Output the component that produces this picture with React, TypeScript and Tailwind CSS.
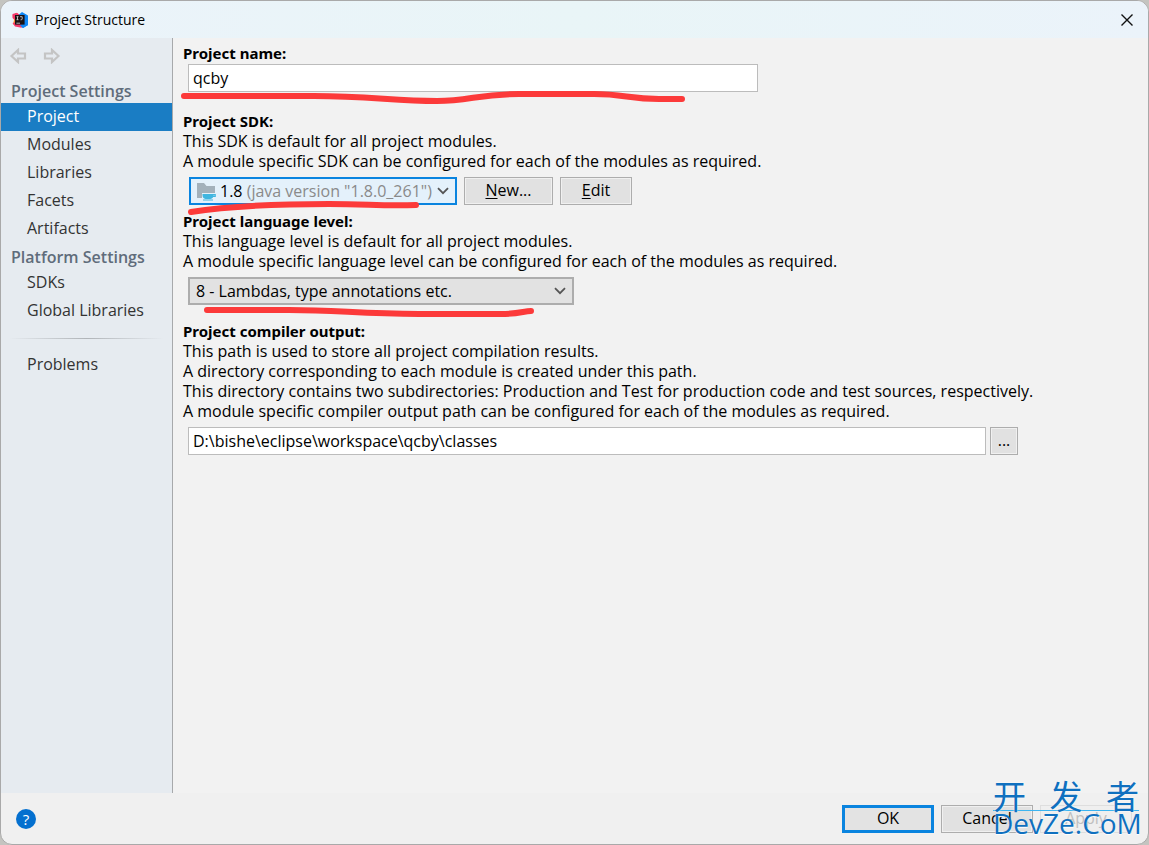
import { useState } from "react";
import type { ReactNode } from "react";
import clsx from "clsx";

const projectItems = ["Project", "Modules", "Libraries", "Facets", "Artifacts"];
const platformItems = ["SDKs", "Global Libraries"];

const IdeaLogo = () => (
  <svg width="16" height="16" viewBox="0 0 16 16" aria-hidden="true">
    <path d="M0.5 3.5 L4 1 L8 3 L6 12 L1 12.5 L2 8 Z" fill="#fb8a2c" />
    <path d="M0.5 2 L5 0.8 L9 4 L3 8 L0.5 6 Z" fill="#f5386b" />
    <path d="M7 2.5 L10 0 L16 3.5 L16 13 L11 16 L7 13 Z" fill="#0f86f5" />
    <path d="M0.5 11 L5 10 L12 13 L9.5 15.8 L3 14.5 Z" fill="#f5386b" />
    <path d="M11 11 L16 13 L11 16 L8 13.5 Z" fill="#0f86f5" />
    <rect x="3" y="3" width="9.6" height="9.6" fill="#1a1214" />
    <path
      d="M4.5 4.7h2M5.5 4.7v3M4.5 7.7h2M8 4.7h2.2v2.4q0 .8-1.6.7M4.4 11.2h3.6"
      stroke="#ddd"
      strokeWidth="0.8"
      fill="none"
    />
  </svg>
);

const ArrowIcon = ({ flip }: { flip?: boolean }) => (
  <svg
    width="18"
    height="16"
    viewBox="0 0 18 16"
    className={clsx(flip && "rotate-180")}
    aria-hidden="true"
  >
    <path
      d="M2.5 8 L9 2 V5.5 H16 V10.5 H9 V14 Z"
      fill="none"
      stroke="#c4c4c4"
      strokeWidth="2.2"
    />
  </svg>
);

const JdkIcon = () => (
  <svg width="20" height="20" viewBox="0 0 20 20" aria-hidden="true">
    <path d="M1 2h7l2.5 3H19v7H6v5H1z" fill="#a3b1bb" />
    <path d="M6.5 13h11v1q0 3.4-3 4h-5q-3-.6-3-4z" fill="#40b6e0" />
    <path d="M17 13.7h2.2v1.6H17" fill="none" stroke="#40b6e0" strokeWidth="1.2" />
    <path d="M7 18.4h10v1.1H7z" fill="#40b6e0" />
  </svg>
);

const Chevron = () => (
  <svg width="12" height="8" viewBox="0 0 12 8" aria-hidden="true">
    <path d="M1 1.2 L6 6.2 L11 1.2" fill="none" stroke="#555" strokeWidth="1.8" />
  </svg>
);

const Stroke = ({ d, className }: { d: string; className: string }) => (
  <svg
    width="510"
    height="24"
    viewBox="0 0 510 24"
    className={clsx("pointer-events-none absolute z-10", className)}
    aria-hidden="true"
  >
    <path
      d={d}
      fill="none"
      stroke="#fc3a3a"
      strokeWidth="6"
      strokeLinecap="round"
      strokeLinejoin="round"
    />
  </svg>
);

const NavGroup = ({
  title,
  items,
  active,
  onSelect,
}: {
  title?: string;
  items: string[];
  active: string;
  onSelect: (item: string) => void;
}) => (
  <div>
    {title && (
      <h2 className="h-[26px] pl-[10px] font-semibold leading-7 text-[#5f6c7b]">{title}</h2>
    )}
    <ul>
      {items.map((item) => (
        <li key={item}>
          <button
            type="button"
            onClick={() => onSelect(item)}
            className={clsx(
              "block h-7 w-full pb-0.5 pl-[26px] text-left",
              active === item ? "bg-[#1a7dc4] text-white" : "text-[#333]"
            )}
          >
            {item}
          </button>
        </li>
      ))}
    </ul>
  </div>
);

const PushButton = ({
  children,
  className,
  label,
}: {
  children: ReactNode;
  className?: string;
  label?: string;
}) => (
  <button
    type="button"
    aria-label={label}
    className={clsx(
      "h-7 border border-[#adadad] bg-[#e1e1e1] pb-0.5 shadow-[inset_0_0_0_1px_#f0f0f0]",
      className
    )}
  >
    {children}
  </button>
);

const App = () => {
  const [active, setActive] = useState("Project");
  const [name, setName] = useState("qcby");
  const [output, setOutput] = useState("D:\\bishe\\eclipse\\workspace\\qcby\\classes");

  return (
    <div className="min-h-screen bg-[#c4c4c0] font-['Open_Sans','Noto_Sans_CJK_SC',sans-serif] text-[16px] leading-5 text-black">
      <div className="flex min-h-screen flex-col overflow-hidden rounded-xl border border-[#a9a9a9] bg-[#f0f0f0]">
        <header className="flex h-[37px] items-center gap-[7px] bg-gradient-to-r from-[#ebf3fa] via-[#e9f5f7] to-[#ebf3fa] pl-[11px] pr-[15px]">
          <IdeaLogo />
          <h1 className="flex-1 text-[14px]">Project Structure</h1>
          <button type="button" aria-label="Close">
            <svg width="12" height="12" viewBox="0 0 12 12" aria-hidden="true">
              <path d="M0.5 0.5 L11.5 11.5 M11.5 0.5 L0.5 11.5" stroke="#111" strokeWidth="1.4" />
            </svg>
          </button>
        </header>

        <div className="flex flex-1">
          <nav className="w-[172px] shrink-0 border-r border-[#a7a9ab] bg-[#e6ebf0]">
            <div className="flex h-[39px] gap-4 pl-2 pt-[10px]">
              <button type="button" aria-label="Back" className="h-4">
                <ArrowIcon />
              </button>
              <button type="button" aria-label="Forward" className="h-4">
                <ArrowIcon flip />
              </button>
            </div>
            <NavGroup
              title="Project Settings"
              items={projectItems}
              active={active}
              onSelect={setActive}
            />
            <NavGroup
              title="Platform Settings"
              items={platformItems}
              active={active}
              onSelect={setActive}
            />
            <div className="mx-2 mb-3 mt-[13px] h-px bg-gradient-to-r from-transparent via-[#b0b4b8] to-transparent" />
            <NavGroup items={["Problems"]} active={active} onSelect={setActive} />
          </nav>

          <main className="min-w-0 flex-1 bg-[#f2f2f2] px-[10px] pt-[5px]">
            <section>
              <label htmlFor="name" className="block font-['Noto_Sans',sans-serif] text-[15px] font-bold">
                Project name:
              </label>
              <div className="relative pl-[5px] pt-px">
                <input
                  id="name"
                  value={name}
                  onChange={(e) => setName(e.target.value)}
                  className="block h-7 w-full max-w-[570px] border border-[#bcbcbc] bg-white px-1 outline-none"
                />
                <Stroke
                  className="-left-1 top-[23px]"
                  d="M5 10 H135 C190 10 215 15 258 15 C290 15 300 8 340 8 H415 C445 8 450 13 480 13 H503"
                />
              </div>
            </section>

            <section className="mt-[19px]">
              <h2 className="font-['Noto_Sans',sans-serif] text-[15px] font-bold">Project SDK:</h2>
              <p>This SDK is default for all project modules.</p>
              <p>A module specific SDK can be configured for each of the modules as required.</p>
              <div className="relative flex gap-[7px] pl-[6px] pt-[6px]">
                <div className="grid w-[268px]">
                  <select
                    aria-label="Project SDK"
                    className="col-start-1 row-start-1 h-7 w-full appearance-none border-2 border-[#0a84df] bg-[#e4f1fb] text-transparent outline-none"
                  >
                    <option>1.8</option>
                  </select>
                  <div
                    aria-hidden="true"
                    className="pointer-events-none z-10 col-start-1 row-start-1 flex items-center whitespace-nowrap pl-[7px] pr-2"
                  >
                    <JdkIcon />
                    <span className="ml-1 flex-1">
                      1.8 <span className="text-[#8a8a8a]">(java version "1.8.0_261")</span>
                    </span>
                    <Chevron />
                  </div>
                </div>
                <PushButton className="w-[89px]">
                  <u className="underline-offset-2">N</u>ew...
                </PushButton>
                <PushButton className="w-[72px]">
                  <u className="underline-offset-2">E</u>dit
                </PushButton>
                <Stroke
                  className="-left-1 top-[26px]"
                  d="M12 15 C50 9 110 7 150 7 C190 7 200 9 237 8"
                />
              </div>
            </section>

            <section className="mt-[6px]">
              <label htmlFor="level" className="block font-['Noto_Sans',sans-serif] text-[15px] font-bold">
                Project language level:
              </label>
              <p>This language level is default for all project modules.</p>
              <p>
                A module specific language level can be configured for each of the modules as
                required.
              </p>
              <div className="relative pl-[5px] pt-[6px]">
                <div className="grid max-w-[386px]">
                  <select
                    id="level"
                    className="col-start-1 row-start-1 h-7 w-full appearance-none border-2 border-[#adadad] bg-[#e2e2e2] pl-[6px] outline-none"
                  >
                    <option>8 - Lambdas, type annotations etc.</option>
                  </select>
                  <span className="pointer-events-none z-10 col-start-1 row-start-1 self-center justify-self-end pr-2">
                    <Chevron />
                  </span>
                </div>
                <Stroke
                  className="-left-1 top-[29px]"
                  d="M28 10 H110 C160 10 180 14 240 14 H322 C340 14 345 11 352 11"
                />
              </div>
            </section>

            <section className="mt-4">
              <label htmlFor="output" className="block font-['Noto_Sans',sans-serif] text-[15px] font-bold">
                Project compiler output:
              </label>
              <p>This path is used to store all project compilation results.</p>
              <p>A directory corresponding to each module is created under this path.</p>
              <p>
                This directory contains two subdirectories: Production and Test for production code
                and test sources, respectively.
              </p>
              <p>
                A module specific compiler output path can be configured for each of the modules as
                required.
              </p>
              <div className="flex max-w-[835px] gap-1 pl-[5px] pt-[6px]">
                <input
                  id="output"
                  value={output}
                  onChange={(e) => setOutput(e.target.value)}
                  className="h-7 min-w-0 flex-1 border border-[#bcbcbc] bg-white px-1 outline-none"
                />
                <PushButton className="w-7" label="Browse">
                  ...
                </PushButton>
              </div>
            </section>
          </main>
        </div>

        <footer className="relative flex h-[51px] items-center gap-[7px] pl-[15px] pr-4">
          <button
            type="button"
            aria-label="Help"
            className="size-5 rounded-full bg-[#0470cf] text-[15px] leading-5 text-white"
          >
            ?
          </button>
          <button
            type="button"
            className="ml-auto h-7 w-[92px] border-[3px] border-[#0a84df] bg-[#e3e3e3] pb-0.5"
          >
            OK
          </button>
          <PushButton className="w-[92px]">Cancel</PushButton>
          <button
            type="button"
            disabled
            className="h-7 w-[92px] border border-[#dedede] bg-[#efefef] pb-0.5 text-[#c0c0c0]"
          >
            Apply
          </button>
          <div className="pointer-events-none absolute bottom-[9px] right-[9px] w-[146px] text-[#0f70bf]">
            <div className="flex justify-between font-['Noto_Sans_CJK_SC',sans-serif] text-[33px] leading-[30px] [text-shadow:0_0_2px_#fff]">
              <span>开</span>
              <span>发</span>
              <span>者</span>
            </div>
            <div className="h-px bg-[#3cb4f0]" />
            <div className="text-[28px] leading-6 [text-shadow:0_1px_1px_#fff]">DevZe.CoM</div>
          </div>
        </footer>
      </div>
    </div>
  );
};

export default App;
